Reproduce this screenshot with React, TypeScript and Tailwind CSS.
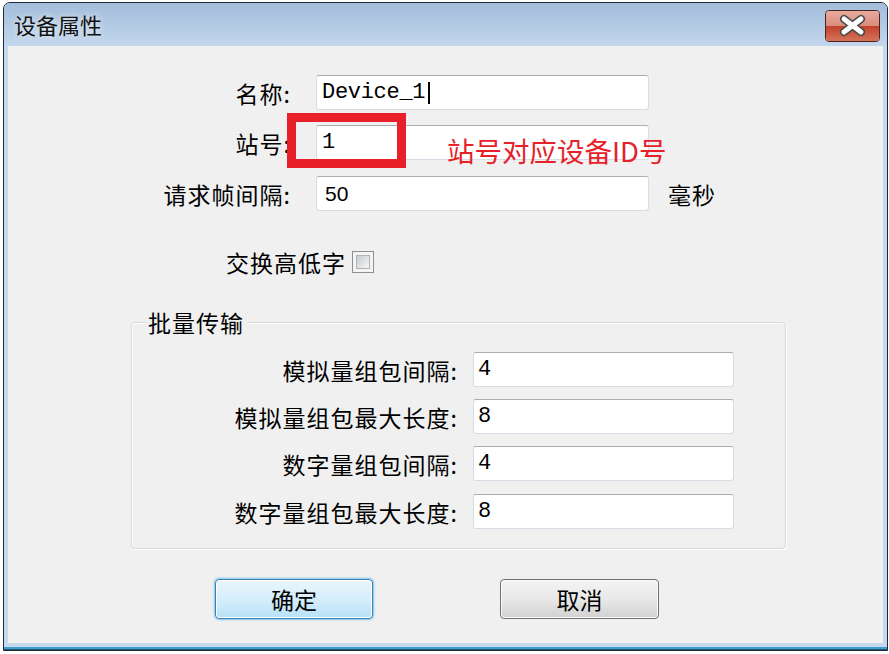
import React from "react";

const cjk = "font-['Noto_Sans_CJK_SC',sans-serif]";

function TextBox({ children, className = "" }: { children?: React.ReactNode; className?: string }) {
  return (
    <div
      className={`h-[35px] bg-white border border-[#d6dde6] border-t-[#abadb3] rounded-[3px] flex items-center ${className}`}
    >
      {children}
    </div>
  );
}

function Row({
  label,
  labelW,
  gap,
  inputW,
  children,
  className = "",
  after,
}: {
  label: string;
  labelW: string;
  gap: string;
  inputW: string;
  children?: React.ReactNode;
  className?: string;
  after?: React.ReactNode;
}) {
  return (
    <div className={`flex items-center h-[35px] ${className}`}>
      <div className={`${labelW} text-right text-[23px] leading-[28px] text-black tracking-[1px]`}>{label}</div>
      <TextBox className={`${gap} ${inputW}`}>{children}</TextBox>
      {after}
    </div>
  );
}

const mono = "font-['Liberation_Mono',monospace] text-[22px] tracking-[-0.3px] text-black";

export default function App() {
  return (
    <div className={`w-[889px] h-[654px] bg-white pt-[2px] pl-[3px] ${cjk}`}>
      <div className="w-[885px] h-[649px] border border-[#1e2a38] rounded-t-[7px] bg-[#c4d9ee] flex flex-col overflow-hidden">
        {/* Title bar */}
        <div className="h-[43px] shrink-0 flex items-start justify-between bg-gradient-to-b from-[#a3bddb] to-[#c3d7ed] pl-[10px] pr-[7px]">
          <div className="h-[43px] flex items-center text-[22px] text-[#111] [text-shadow:0_0_6px_rgba(255,255,255,0.8)]">
            设备属性
          </div>
          <div className="mt-[7px] w-[55px] h-[32px] rounded-[4px] border border-[#4b2420] overflow-hidden flex flex-col shadow-[inset_0_0_0_1px_rgba(255,210,200,0.6)] relative">
            <div className="h-1/2 bg-gradient-to-b from-[#e8ab9e] to-[#d98c7b]" />
            <div className="h-1/2 bg-gradient-to-b from-[#c23f28] to-[#d6725a]" />
            <svg className="absolute left-0 top-0" width="53" height="30" viewBox="0 0 53 30">
              <path d="M18 8 L35 21 M35 8 L18 21" stroke="#4a4a4a" strokeWidth="8" strokeLinecap="round" />
              <path d="M18 8 L35 21 M35 8 L18 21" stroke="#ffffff" strokeWidth="5" strokeLinecap="round" />
            </svg>
          </div>
        </div>

        {/* Content */}
        <div className="relative flex-1 mx-[4px] bg-[#f0f0f0] flex flex-col">
          <div className="pt-[29px] flex flex-col">
            <Row label="名称:" labelW="w-[283px]" gap="ml-[25px]" inputW="w-[333px]">
              <span className={`pl-[5px] ${mono}`}>Device_1</span>
              <span className="inline-block w-[1.5px] h-[22px] bg-black ml-[3px]" />
            </Row>
            <Row label="站号:" labelW="w-[283px]" gap="ml-[25px]" inputW="w-[333px]" className="mt-[15px]">
              <span className={`pl-[5px] ${mono}`}>1</span>
            </Row>
            <Row
              label="请求帧间隔:"
              labelW="w-[283px]"
              gap="ml-[25px]"
              inputW="w-[333px]"
              className="mt-[16px]"
              after={<span className="ml-[19px] text-[23px] leading-[28px] text-black tracking-[1px]">毫秒</span>}
            >
              <span className="pl-[8px] font-['Liberation_Sans',sans-serif] text-[21px] text-black">50</span>
            </Row>
          </div>

          {/* Checkbox row */}
          <div className="mt-[40px] h-[22px] flex items-center pl-[218px]">
            <span className="text-[23px] leading-[28px] text-black tracking-[1px]">交换高低字</span>
            <div className="ml-[6px] w-[22px] h-[22px] border border-[#8e8f8f] bg-[#f4f4f4] p-[3px]">
              <div className="w-full h-full border border-[#b0b4b9] bg-gradient-to-br from-[#c7cbd1] to-[#f6f6f6]" />
            </div>
          </div>

          {/* Group box */}
          <div className="relative mt-[49px] ml-[123px] w-[655px] h-[227px] border border-[#d3dbe1] rounded-[4px] shadow-[inset_1px_1px_0_#ffffff,1px_1px_0_#ffffff] pt-[29px] flex flex-col">
            <span className="absolute left-[13px] top-[-15px] px-[3px] bg-[#f0f0f0] text-[23px] leading-[28px] text-black tracking-[1px]">
              批量传输
            </span>
            <Row label="模拟量组包间隔:" labelW="w-[326px]" gap="ml-[15px]" inputW="w-[261px]">
              <span className={`pl-[4px] ${mono}`}>4</span>
            </Row>
            <Row label="模拟量组包最大长度:" labelW="w-[326px]" gap="ml-[15px]" inputW="w-[261px]" className="mt-[12px]">
              <span className={`pl-[4px] ${mono}`}>8</span>
            </Row>
            <Row label="数字量组包间隔:" labelW="w-[326px]" gap="ml-[15px]" inputW="w-[261px]" className="mt-[12px]">
              <span className={`pl-[4px] ${mono}`}>4</span>
            </Row>
            <Row label="数字量组包最大长度:" labelW="w-[326px]" gap="ml-[15px]" inputW="w-[261px]" className="mt-[13px]">
              <span className={`pl-[4px] ${mono}`}>8</span>
            </Row>
          </div>

          {/* Buttons */}
          <div className="mt-[30px] pl-[207px] flex gap-[127px]">
            <button className="w-[158px] h-[40px] rounded-[4px] border border-[#3c7fb1] bg-gradient-to-b from-[#eaf6fd] via-[#d6eefb] to-[#b8e1f7] shadow-[inset_0_0_0_1px_#ffffff,0_0_2px_1px_#7cc8ee] text-[23px] leading-[28px] text-black">
              确定
            </button>
            <button className="w-[159px] h-[40px] rounded-[4px] border border-[#707070] bg-gradient-to-b from-[#f4f4f4] via-[#e8e8e8] to-[#d2d2d2] shadow-[inset_0_0_0_1px_#fbfbfb] text-[23px] leading-[28px] text-black">
              取消
            </button>
          </div>

          {/* Annotations */}
          <div className="absolute left-[279px] top-[67px] w-[119px] h-[55px] border-[9px] border-[#e8202a]" />
          <span className="absolute left-[439px] top-[88px] text-[27.5px] leading-[32px] text-[#e62129] whitespace-nowrap">
            站号对应设备ID号
          </span>
        </div>

        {/* Bottom frame */}
        <div className="h-[4px] shrink-0" />
        <div className="h-[2px] shrink-0 bg-[#3d9fcc]" />
        <div className="h-[1px] shrink-0 bg-[#26566e]" />
      </div>
    </div>
  );
}
